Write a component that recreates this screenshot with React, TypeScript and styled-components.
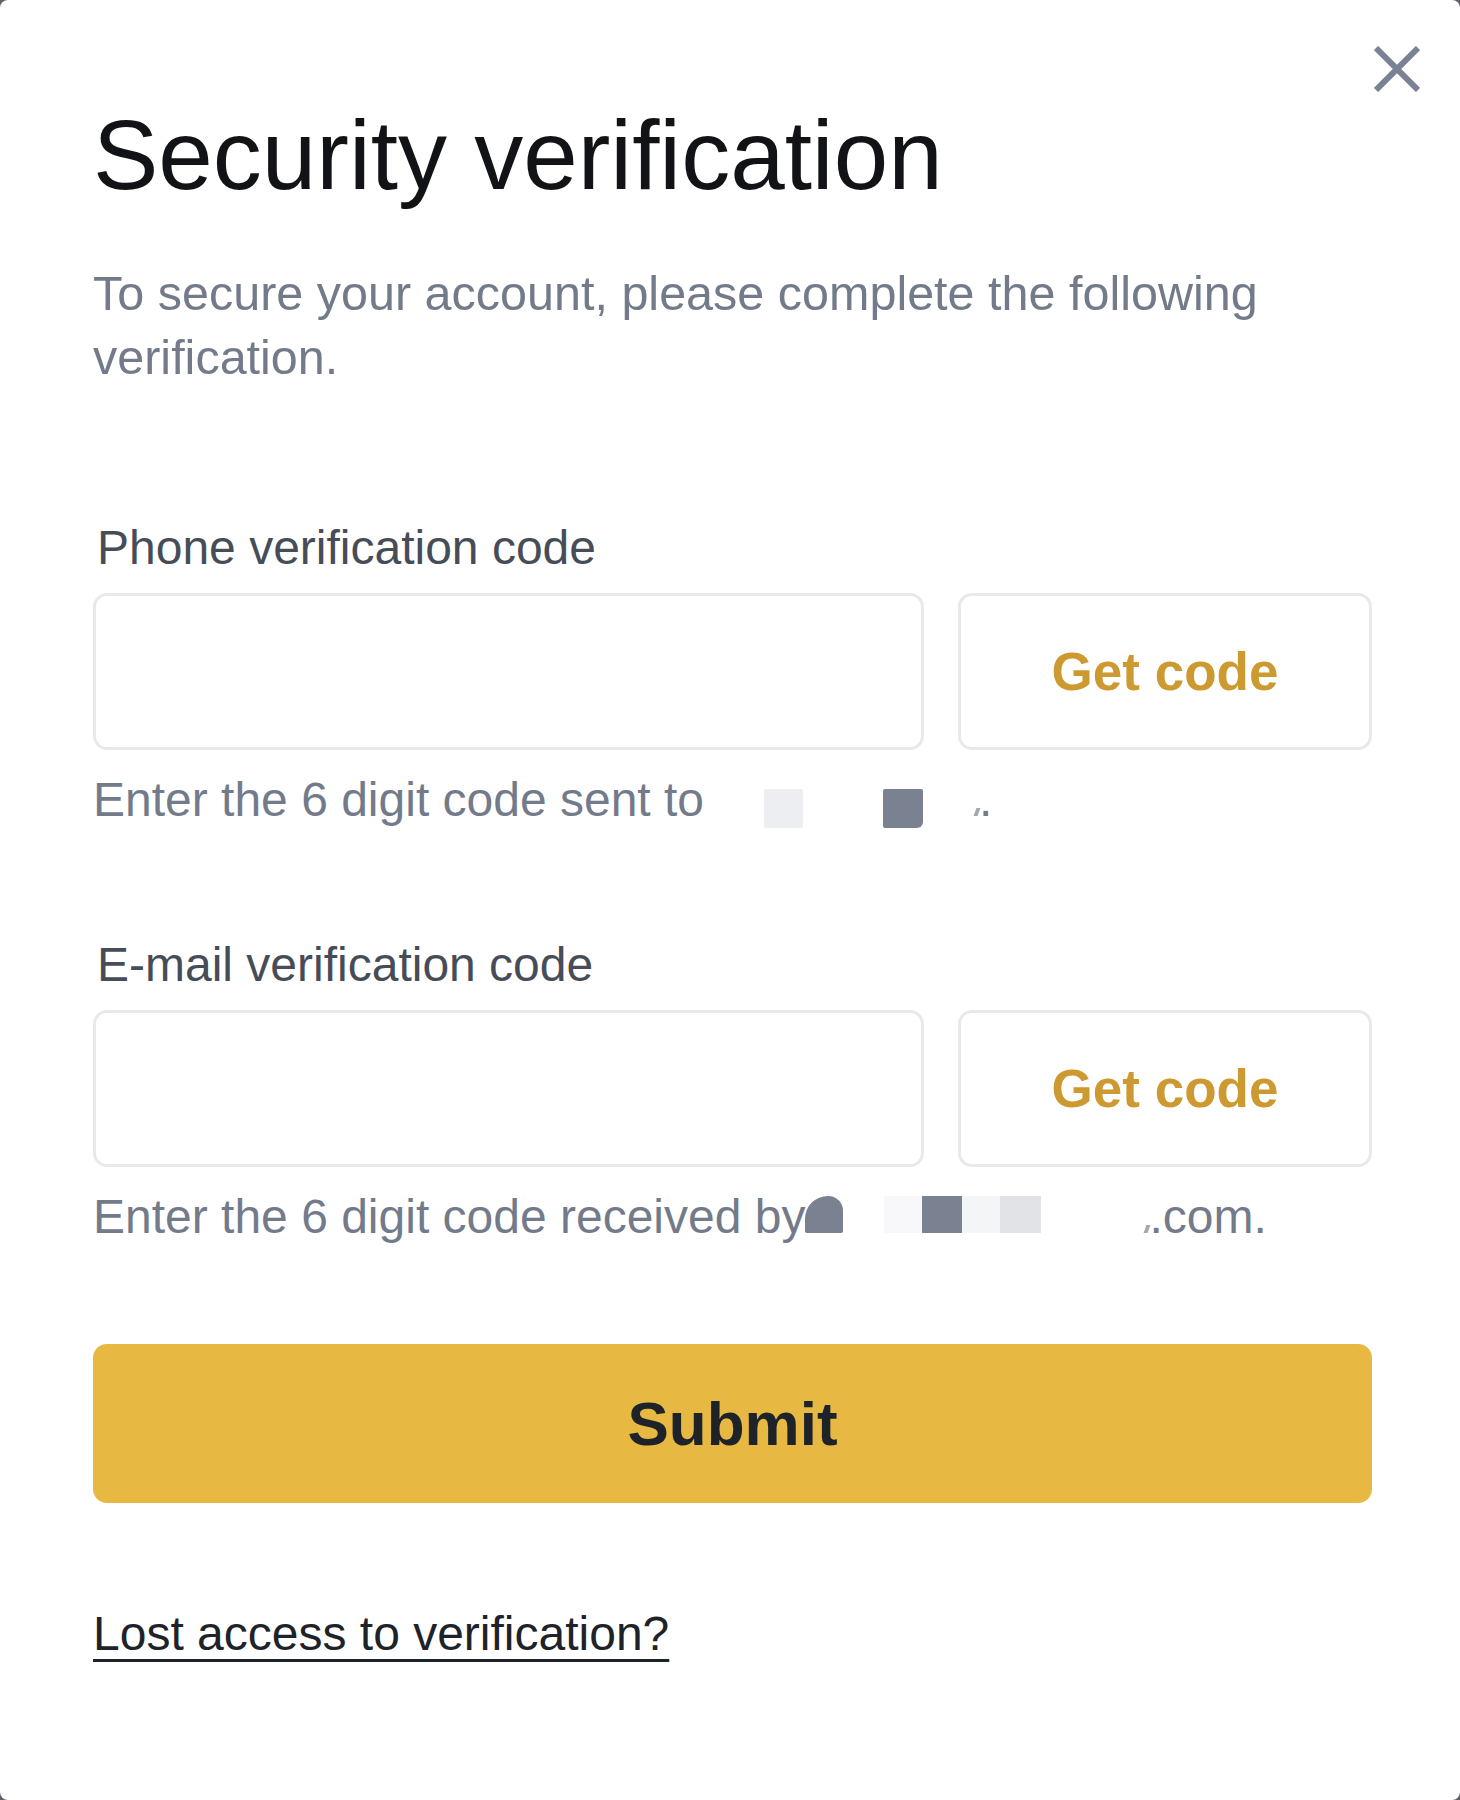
import styled, { createGlobalStyle } from 'styled-components';

const GlobalStyle = createGlobalStyle`
  html, body {
    margin: 0;
    padding: 0;
    background: #5f6166;
  }
  * {
    box-sizing: border-box;
  }
`;

const Modal = styled.div`
  position: relative;
  width: 1460px;
  height: 1800px;
  background: #ffffff;
  border-radius: 8px;
  padding: 99px 88px 0 93px;
  font-family: 'Liberation Sans', Arial, sans-serif;
  display: flex;
  flex-direction: column;
`;

const CloseButton = styled.button`
  position: absolute;
  top: 46px;
  right: 40px;
  width: 46px;
  height: 46px;
  padding: 0;
  border: none;
  background: transparent;
  cursor: pointer;
  display: block;
`;

const Title = styled.h1`
  margin: 0;
  font-size: 98px;
  line-height: 1.15;
  font-weight: 400;
  color: #111316;
`;

const Subtitle = styled.p`
  margin: 49px 0 0;
  font-size: 48.5px;
  line-height: 64px;
  color: #737b8a;
`;

const Field = styled.div<{ $first?: boolean }>`
  display: flex;
  flex-direction: column;
  margin-top: ${(p) => (p.$first ? '131px' : '109px')};
`;

const Label = styled.label`
  padding-left: 4px;
  font-size: 48px;
  line-height: 56px;
  color: #474d57;
`;

const InputRow = styled.div`
  display: flex;
  gap: 34px;
  margin-top: 17px;
`;

const CodeInput = styled.input`
  flex: 1;
  height: 157px;
  border: 3px solid #e7e9ec;
  border-radius: 14px;
  background: #fff;
  font-family: inherit;
  font-size: 48px;
  padding: 0 30px;
  outline: none;
`;

const GetCode = styled.button`
  width: 414px;
  height: 157px;
  border: 3px solid #e7e9ec;
  border-radius: 14px;
  background: #fff;
  font-family: inherit;
  font-size: 53px;
  font-weight: 700;
  color: #cc9a30;
  cursor: pointer;
`;

const Hint = styled.div`
  margin-top: 22px;
  font-size: 48px;
  line-height: 56px;
  color: #737b8a;
  white-space: nowrap;
`;

const Mask = styled.span<{ $w: number; $bg: string; $ml: number; $drop?: boolean; $round?: string }>`
  display: inline-block;
  width: ${(p) => p.$w}px;
  height: ${(p) => (p.$drop ? 39 : 37)}px;
  margin-left: ${(p) => p.$ml}px;
  background: ${(p) => p.$bg};
  border-radius: ${(p) => p.$round ?? '2px'};
  vertical-align: ${(p) => (p.$drop ? '-12px' : 'baseline')};
`;

const Speck = styled.span<{ $ml: number }>`
  display: inline-block;
  width: 4px;
  height: 8px;
  margin-left: ${(p) => p.$ml}px;
  background: #a3a8b2;
  transform: skewX(-20deg);
  vertical-align: 0;
`;

const SubmitButton = styled.button`
  margin-top: 99px;
  width: 100%;
  height: 159px;
  border: none;
  border-radius: 14px;
  background: #e8b942;
  font-family: inherit;
  font-size: 62px;
  font-weight: 700;
  color: #1e2329;
  cursor: pointer;
`;

const LostLink = styled.a`
  align-self: flex-start;
  margin-top: 103px;
  font-size: 48px;
  line-height: 56px;
  color: #1e2329;
  text-decoration: underline;
  text-decoration-thickness: 3px;
  text-underline-offset: 9px;
  cursor: pointer;
`;

export default function App() {
  return (
    <>
      <GlobalStyle />
      <Modal>
        <CloseButton aria-label="Close">
          <svg width="46" height="46" viewBox="0 0 46 46">
            <path d="M2 2 L44 44 M44 2 L2 44" stroke="#7a8294" strokeWidth="6" fill="none" />
          </svg>
        </CloseButton>
        <Title>Security verification</Title>
        <Subtitle>To secure your account, please complete the following verification.</Subtitle>

        <Field $first>
          <Label>Phone verification code</Label>
          <InputRow>
            <CodeInput type="text" />
            <GetCode>Get code</GetCode>
          </InputRow>
          <Hint>
            Enter the 6 digit code sent to
            <Mask $w={39} $bg="#eceef1" $ml={60} $drop />
            <Mask $w={40} $bg="#7a8291" $ml={80} $drop $round="2px 2px 6px 2px" />
            <Speck $ml={52} />
            .
          </Hint>
        </Field>

        <Field>
          <Label>E-mail verification code</Label>
          <InputRow>
            <CodeInput type="text" />
            <GetCode>Get code</GetCode>
          </InputRow>
          <Hint>
            Enter the 6 digit code received by
            <Mask $w={38} $bg="#7a8291" $ml={0} $round="70% 45% 2px 2px" />
            <Mask $w={38} $bg="#f8f8fa" $ml={41} />
            <Mask $w={40} $bg="#7a8291" $ml={0} $round="0" />
            <Mask $w={38} $bg="#f4f5f7" $ml={0} $round="0" />
            <Mask $w={41} $bg="#e1e3e7" $ml={0} $round="0" />
            <Speck $ml={104} />
            .com.
          </Hint>
        </Field>

        <SubmitButton>Submit</SubmitButton>
        <LostLink>Lost access to verification?</LostLink>
      </Modal>
    </>
  );
}
